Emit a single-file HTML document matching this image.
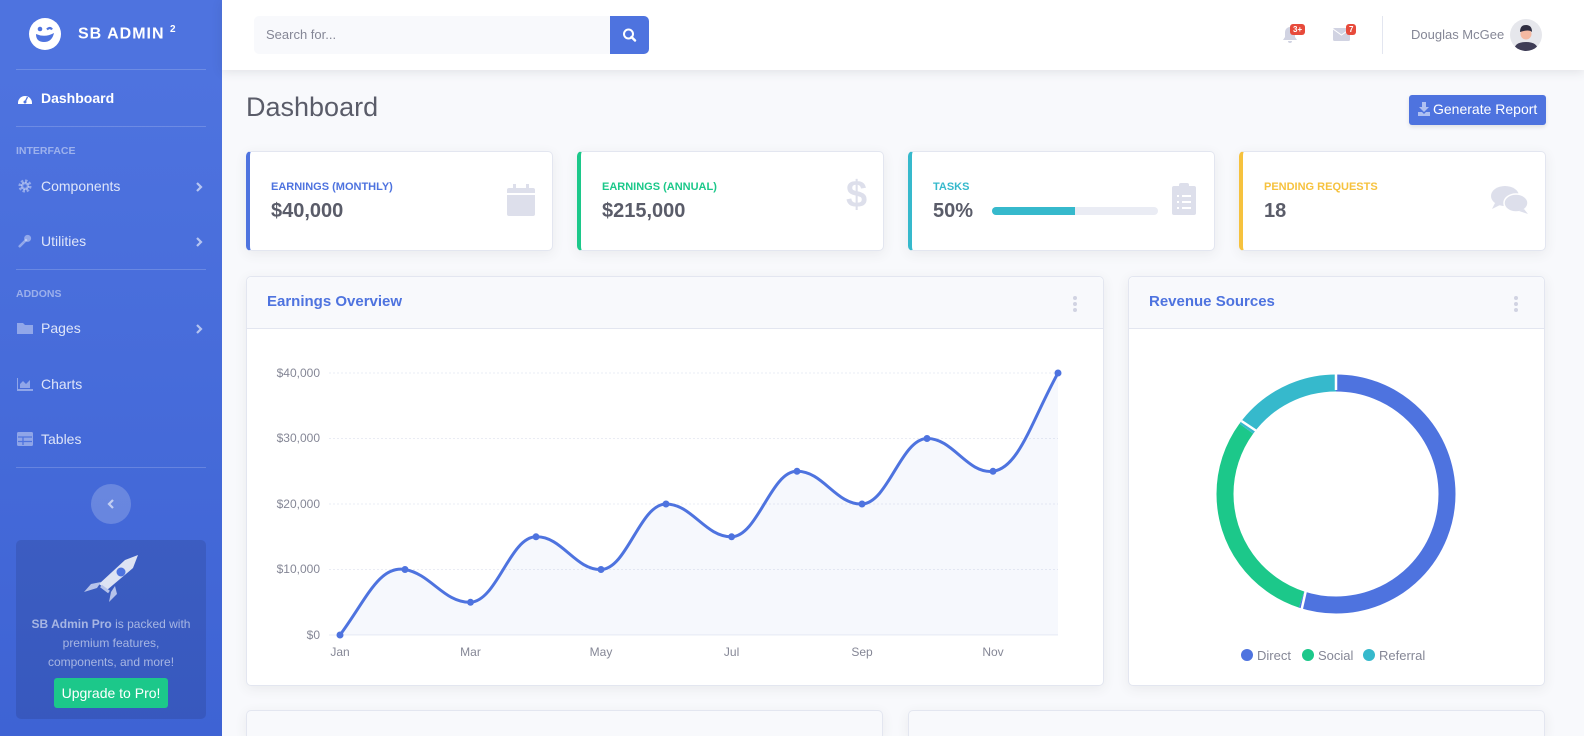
<!DOCTYPE html>
<html style="overflow:hidden;height:736px"><head><meta charset="utf-8">
<style>
*{box-sizing:border-box;margin:0;padding:0}
body{width:1584px;height:736px;overflow:hidden;background:#f8f9fc;font-family:"Liberation Sans",sans-serif;color:#858796;position:relative}
.sb{position:absolute;left:0;top:0;width:222px;height:736px;background:linear-gradient(180deg,#4e73df 10%,#3e63d4 100%);color:#fff}
.brand{position:absolute;left:28px;top:17px;display:flex;align-items:center}
.brand b{font-size:16px;letter-spacing:1px;margin-left:16px;font-weight:800}
.hr{position:absolute;left:16px;width:190px;height:1px;background:rgba(255,255,255,.18)}
.nav{position:absolute;left:17px;font-size:14px;color:rgba(255,255,255,.82);display:flex;align-items:center;width:188px}
.nav .ic{width:16px;height:14px;margin-right:8px;display:inline-block}
.nav .ch{position:absolute;right:2px;top:3px}
.head{position:absolute;left:16px;font-size:10.5px;font-weight:800;color:rgba(255,255,255,.45)}
.top{position:absolute;left:222px;top:0;width:1362px;height:70px;background:#fff;box-shadow:0 2px 10px rgba(58,59,69,.12)}
.card{position:absolute;background:#fff;border:1px solid #e3e6f0;border-radius:5px;box-shadow:0 3px 12px rgba(58,59,69,.08)}
.stat{top:151px;height:100px;width:307px;border-left-width:4px}
.stat .l{position:absolute;left:21px;top:29px;font-size:11px;font-weight:bold}
.stat .v{position:absolute;left:21px;top:48px;font-size:20px;font-weight:bold;color:#5a5c69}
.ch-h{height:52px;background:#f8f9fc;border-bottom:1px solid #e3e6f0;border-radius:5px 5px 0 0;padding:16px 20px;color:#4e73df;font-weight:bold;font-size:15px;position:relative}
.dots{position:absolute;right:26px;top:19px;width:4px}
.dots i{display:block;width:4px;height:4px;border-radius:2px;background:#d1d3e2;margin-bottom:2px}
</style></head><body>
<div class="sb">
 <div class="brand">
  <svg width="34" height="34" viewBox="0 0 34 34"><circle cx="17" cy="17" r="16" fill="#fff"/><circle cx="12" cy="12" r="2.3" fill="#4e73df"/><path d="M19 12.5q3-3 5 0" stroke="#4e73df" stroke-width="2.2" fill="none"/><path d="M8 17q9 4 18-1q-2 9-10 9q-8 0-8-8z" fill="#4e73df"/></svg>
  <b>SB ADMIN <sup style="font-size:10px">2</sup></b>
 </div>
 <div class="hr" style="top:69px"></div>
 <div class="nav" style="top:90px;color:#fff;font-weight:bold"><svg class="ic" viewBox="0 0 16 14"><path d="M1 12A7 7 0 0 1 15 12L15 13L1 13Z" fill="#fff"/><circle cx="8" cy="11" r="1.5" fill="#4e73df"/><path d="M8 11L10.5 6" stroke="#4e73df" stroke-width="1.3"/></svg>Dashboard</div>
 <div class="hr" style="top:126px"></div>
 <div class="head" style="top:145px">INTERFACE</div>
 <div class="nav" style="top:178px"><svg class="ic" viewBox="0 0 16 16"><circle cx="8" cy="8" r="5.5" fill="none" stroke="rgba(255,255,255,.4)" stroke-width="4" stroke-dasharray="2.5 1.8"/><circle cx="8" cy="8" r="4.5" fill="rgba(255,255,255,.4)"/><circle cx="8" cy="8" r="2" fill="#4e73df"/></svg>Components<svg class="ch" width="8" height="12" viewBox="0 0 8 12"><path d="M2 2l4 4-4 4" stroke="rgba(255,255,255,.6)" stroke-width="2.2" fill="none"/></svg></div>
 <div class="nav" style="top:233px"><svg class="ic" viewBox="0 0 16 16"><path d="M2 14L9 7" stroke="rgba(255,255,255,.4)" stroke-width="3" stroke-linecap="round"/><circle cx="11" cy="5" r="4" fill="rgba(255,255,255,.4)"/></svg>Utilities<svg class="ch" width="8" height="12" viewBox="0 0 8 12"><path d="M2 2l4 4-4 4" stroke="rgba(255,255,255,.6)" stroke-width="2.2" fill="none"/></svg></div>
 <div class="hr" style="top:269px"></div>
 <div class="head" style="top:288px">ADDONS</div>
 <div class="nav" style="top:320px"><svg class="ic" viewBox="0 0 16 14"><path d="M0 2h6l2 2h8v9H0z" fill="rgba(255,255,255,.4)"/></svg>Pages<svg class="ch" width="8" height="12" viewBox="0 0 8 12"><path d="M2 2l4 4-4 4" stroke="rgba(255,255,255,.6)" stroke-width="2.2" fill="none"/></svg></div>
 <div class="nav" style="top:376px"><svg class="ic" viewBox="0 0 16 14"><path d="M0 1v12h16" stroke="rgba(255,255,255,.4)" stroke-width="2" fill="none"/><path d="M3 11V7l3-3 3 3 4-4v8z" fill="rgba(255,255,255,.4)"/></svg>Charts</div>
 <div class="nav" style="top:431px"><svg class="ic" viewBox="0 0 16 14"><rect x="0" y="0" width="16" height="14" rx="1.5" fill="rgba(255,255,255,.4)"/><path d="M1 5h14M1 9.5h14M6 5v8" stroke="#4e73df" stroke-width="1.3"/></svg>Tables</div>
 <div class="hr" style="top:467px"></div>
 <div style="position:absolute;left:91px;top:484px;width:40px;height:40px;border-radius:50%;background:rgba(255,255,255,.2)"><svg width="40" height="40" viewBox="0 0 40 40"><path d="M22 16l-4 4 4 4" stroke="rgba(255,255,255,.6)" stroke-width="2.2" fill="none"/></svg></div>
 <div style="position:absolute;left:16px;top:540px;width:190px;height:179px;border-radius:5px;background:rgba(0,0,0,.1);text-align:center">
  <svg width="60" height="52" viewBox="0 0 60 52" style="margin-top:14px"><path d="M26 36L18 30L44 6L57 1L52 14Z" fill="#dde3f3"/><path d="M20 28L10 30L3 38L16 34Z M30 38L28 48L36 40L34 32Z" fill="#b6c3ea"/><circle cx="40" cy="18" r="4.5" fill="#4e73df"/><path d="M20 32L28 38" stroke="#b6c3ea" stroke-width="3"/></svg>
  <div style="font-size:12px;line-height:19px;color:rgba(255,255,255,.55);margin-top:4px"><b>SB Admin Pro</b> is packed with<br>premium features,<br>components, and more!</div>
  <div style="display:inline-block;margin-top:6px;background:#1cc88a;color:#fff;font-size:14px;padding:7px 8px;border-radius:3px">Upgrade to Pro!</div>
 </div>
</div>

<div class="top">
 <div style="position:absolute;left:32px;top:16px;width:356px;height:38px;background:#f8f9fc;border-radius:5px 0 0 5px;font-size:13px;color:#858796;padding:11px 12px">Search for...</div>
 <div style="position:absolute;left:388px;top:16px;width:39px;height:38px;background:#4e73df;border-radius:0 5px 5px 0"><svg width="39" height="38" viewBox="0 0 39 38"><circle cx="18.5" cy="18" r="4.5" fill="none" stroke="#fff" stroke-width="2"/><path d="M21.5 21l3.5 3.5" stroke="#fff" stroke-width="2.4" stroke-linecap="round"/></svg></div>
 <svg style="position:absolute;left:1060px;top:26px" width="16" height="18" viewBox="0 0 16 18"><path d="M8 1a5 5 0 0 1 5 5v5l2 3H1l2-3V6a5 5 0 0 1 5-5z M6 15h4a2 2 0 0 1-4 0z" fill="#d1d3e2"/></svg>
 <div style="position:absolute;left:1068px;top:24px;background:#e74a3b;color:#fff;font-size:8px;font-weight:bold;padding:1px 3px;border-radius:3px">3+</div>
 <svg style="position:absolute;left:1111px;top:28px" width="17" height="13" viewBox="0 0 17 13"><rect width="17" height="13" rx="1.5" fill="#d1d3e2"/><path d="M0 1l8.5 6L17 1" stroke="#fff" stroke-width="1" fill="none"/></svg>
 <div style="position:absolute;left:1124px;top:24px;background:#e74a3b;color:#fff;font-size:8px;font-weight:bold;padding:1px 3px;border-radius:3px">7</div>
 <div style="position:absolute;left:1160px;top:16px;width:1px;height:38px;background:#e3e6f0"></div>
 <div style="position:absolute;left:1189px;top:27px;font-size:13px;color:#858796">Douglas McGee</div>
 <svg style="position:absolute;left:1288px;top:19px" width="32" height="32" viewBox="0 0 32 32"><clipPath id="c"><circle cx="16" cy="16" r="16"/></clipPath><g clip-path="url(#c)"><rect width="32" height="32" fill="#e6e7ec"/><path d="M4 32q0-9 12-9t12 9z" fill="#3f3d56"/><circle cx="16" cy="15" r="5.5" fill="#f4b9a2"/><path d="M10 13q0-7 6-7t6 7q-3-3-12 0z" fill="#2f2e41"/></g></svg>
</div>

<div style="position:absolute;left:246px;top:92px;font-size:27px;color:#5a5c69">Dashboard</div>
<div style="position:absolute;left:1409px;top:95px;width:137px;height:30px;background:#4e73df;border-radius:3px;color:#fff;font-size:14px;padding:6px 0 0 24px;box-shadow:0 2px 4px rgba(0,0,0,.1)">Generate Report</div>
<svg style="position:absolute;left:1418px;top:102px" width="12" height="14" viewBox="0 0 12 14"><path d="M4 0h4v5h3L6 10 1 5h3z M0 10h4l2 2 2-2h4v4H0z" fill="rgba(255,255,255,.55)"/></svg>

<div class="card stat" style="left:246px;border-left-color:#4e73df"><div class="l" style="color:#4e73df">EARNINGS (MONTHLY)</div><div class="v">$40,000</div>
 <svg style="position:absolute;left:257px;top:32px" width="28" height="32" viewBox="0 0 28 32"><rect y="4" width="28" height="28" rx="2" fill="#dddfeb"/><rect x="6" y="0" width="3" height="7" fill="#dddfeb"/><rect x="19" y="0" width="3" height="7" fill="#dddfeb"/><rect y="9" width="28" height="2" fill="#fff"/></svg></div>
<div class="card stat" style="left:577px;border-left-color:#1cc88a"><div class="l" style="color:#1cc88a">EARNINGS (ANNUAL)</div><div class="v">$215,000</div>
 <div style="position:absolute;left:265px;top:22px;font-size:38px;font-weight:bold;color:#dddfeb">$</div></div>
<div class="card stat" style="left:908px;border-left-color:#36b9cc"><div class="l" style="color:#36b9cc">TASKS</div><div class="v">50%</div>
 <div style="position:absolute;left:80px;top:55px;width:166px;height:8px;border-radius:4px;background:#eaecf4"><div style="width:83px;height:8px;border-radius:4px 0 0 4px;background:#36b9cc"></div></div>
 <svg style="position:absolute;left:260px;top:31px" width="24" height="32" viewBox="0 0 24 32"><rect y="3" width="24" height="29" rx="2" fill="#dddfeb"/><rect x="7" y="0" width="10" height="6" rx="2" fill="#dddfeb"/><path d="M5 13h2M10 13h9M5 19h2M10 19h9M5 25h2M10 25h9" stroke="#fff" stroke-width="2"/></svg></div>
<div class="card stat" style="left:1239px;border-left-color:#f6c23e"><div class="l" style="color:#f6c23e">PENDING REQUESTS</div><div class="v">18</div>
 <svg style="position:absolute;left:248px;top:33px" width="38" height="30" viewBox="0 0 38 30"><ellipse cx="14" cy="11" rx="14" ry="10" fill="#dddfeb"/><path d="M4 18l-3 6 8-4z" fill="#dddfeb"/><ellipse cx="25" cy="18" rx="12" ry="9" fill="#dddfeb" stroke="#fff" stroke-width="1.5"/><path d="M33 24l4 5-9-3z" fill="#dddfeb"/></svg></div>

<div class="card" style="left:246px;top:276px;width:858px;height:410px">
 <div class="ch-h">Earnings Overview<div class="dots"><i></i><i></i><i></i></div></div>
 <svg style="position:absolute;left:-1px;top:-1px" width="858" height="410" viewBox="246 276 858 410" font-family="Liberation Sans" font-size="12" fill="#858796">
  <g stroke="#eaecf4" stroke-dasharray="2 2"><path d="M329 373H1058M329 438.5H1058M329 504H1058M329 569.5H1058"/></g>
  <path d="M329 635H1058" stroke="#eaecf4"/>
  <g text-anchor="end"><text x="320" y="377">$40,000</text><text x="320" y="442">$30,000</text><text x="320" y="508">$20,000</text><text x="320" y="573">$10,000</text><text x="320" y="639">$0</text></g>
  <g text-anchor="middle"><text x="340" y="656">Jan</text><text x="470.5" y="656">Mar</text><text x="601" y="656">May</text><text x="731.6" y="656">Jul</text><text x="862" y="656">Sep</text><text x="993" y="656">Nov</text></g>
  <path d="M340 635C366 600 379 565 405 569.5C431 574 444 603 470.5 602.3C497 601 510 537 536 536.8C562 536 575 570 601 569.5C627 569 640 504 666 504C692 504 705 537 731.6 536.8C758 536 771 471 797 471.3C823 471 836 505 862 504C888 503 901 439 927 438.5C953 438 967 474 993 471.3C1019 468 1032 420 1058 373L1058 635Z" fill="rgba(78,115,223,.05)"/>
  <path d="M340 635C366 600 379 565 405 569.5C431 574 444 603 470.5 602.3C497 601 510 537 536 536.8C562 536 575 570 601 569.5C627 569 640 504 666 504C692 504 705 537 731.6 536.8C758 536 771 471 797 471.3C823 471 836 505 862 504C888 503 901 439 927 438.5C953 438 967 474 993 471.3C1019 468 1032 420 1058 373" fill="none" stroke="#4e73df" stroke-width="3"/>
  <g fill="#4e73df"><circle cx="340" cy="635" r="3.5"/><circle cx="405" cy="569.5" r="3.5"/><circle cx="470.5" cy="602.3" r="3.5"/><circle cx="536" cy="536.8" r="3.5"/><circle cx="601" cy="569.5" r="3.5"/><circle cx="666" cy="504" r="3.5"/><circle cx="731.6" cy="536.8" r="3.5"/><circle cx="797" cy="471.3" r="3.5"/><circle cx="862" cy="504" r="3.5"/><circle cx="927" cy="438.5" r="3.5"/><circle cx="993" cy="471.3" r="3.5"/><circle cx="1058" cy="373" r="3.5"/></g>
 </svg>
</div>

<div class="card" style="left:1128px;top:276px;width:417px;height:410px">
 <div class="ch-h">Revenue Sources<div class="dots"><i></i><i></i><i></i></div></div>
 <svg style="position:absolute;left:-1px;top:-1px" width="417" height="410" viewBox="1128 276 417 410" font-family="Liberation Sans" font-size="13" fill="#858796">
  <g transform="rotate(-90 1336 494)" fill="none" stroke-width="17">
   <circle cx="1336" cy="494" r="111" stroke="#4e73df" stroke-dasharray="383.6 314" stroke-dashoffset="0"/>
   <circle cx="1336" cy="494" r="111" stroke="#1cc88a" stroke-dasharray="209.2 489" stroke-dashoffset="-383.6"/>
   <circle cx="1336" cy="494" r="111" stroke="#36b9cc" stroke-dasharray="104.6 593" stroke-dashoffset="-592.8"/>
  </g>
  <g stroke="#fff" stroke-width="2.5"><path d="M1336 370V390M1301.5 610L1306 590M1241.5 421L1258 432"/></g>
  <circle cx="1247" cy="655" r="6" fill="#4e73df"/><text x="1257" y="660">Direct</text>
  <circle cx="1308" cy="655" r="6" fill="#1cc88a"/><text x="1318" y="660">Social</text>
  <circle cx="1369" cy="655" r="6" fill="#36b9cc"/><text x="1379" y="660">Referral</text>
 </svg>
</div>

<div class="card" style="left:246px;top:710px;width:637px;height:26px;background:#f8f9fc;border-bottom:none;border-radius:5px 5px 0 0"></div>
<div class="card" style="left:908px;top:710px;width:637px;height:26px;background:#f8f9fc;border-bottom:none;border-radius:5px 5px 0 0"></div>
</body></html>
